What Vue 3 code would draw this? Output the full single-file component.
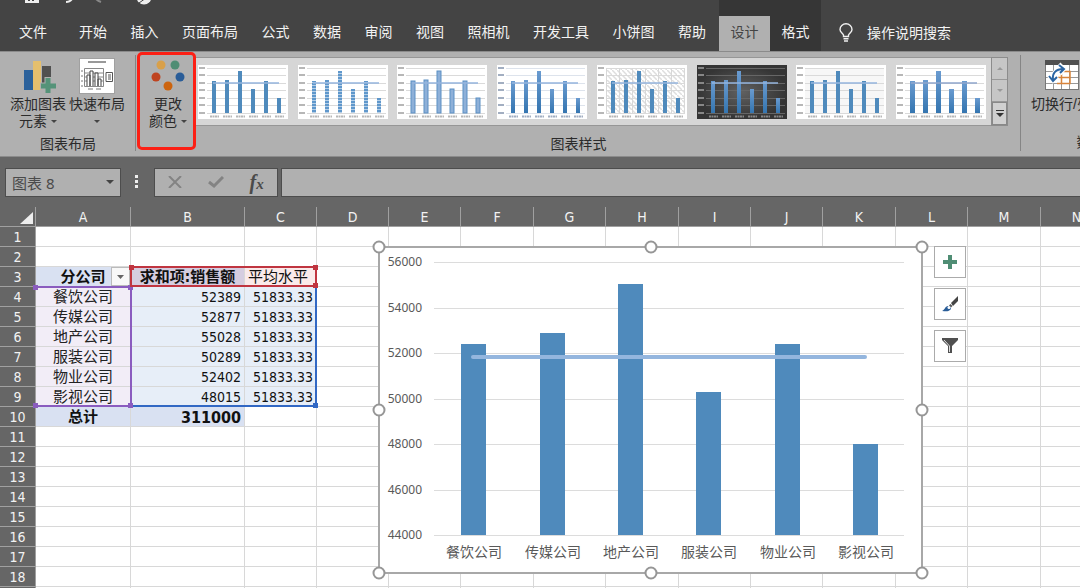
<script setup>
const tabs = ['开始', '插入', '页面布局', '公式', '数据', '审阅', '视图', '照相机', '开发工具', '小饼图', '帮助']

const styles = [
  { id: 'solid', w: 4, fill: '#4f8abc', bg: '#fff' },
  { id: 'striped', w: 4, fill: 'url(#bar-stripes)', bg: '#fff' },
  { id: 'outlined', w: 4, fill: '#8eb0d8', stroke: '#5b8fc4', bg: '#fff' },
  { id: 'blue-axis', w: 4, fill: 'url(#bar-gradient)', bg: '#fff', axis: '#7b8da8', grid: '#dde3ec' },
  { id: 'hatched', w: 4, fill: '#4f8abc', bg: 'url(#hatch)' },
  { id: 'dark', w: 4, fill: 'url(#bar-gradient)', bg: 'url(#dark-bg)', axis: '#aaa', grid: '#666' },
  { id: 'pale', w: 4, fill: '#4f8abc', bg: '#f7f7f7' },
  { id: 'wide', w: 5, fill: 'url(#bar-gradient)', bg: '#fff', line: '#8fa6cc' }
]
const thumbBars = [16, 15, 6, 24, 16, 33].map((y, i) => ({ x: 16 + i * 13, y }))
const thumbGrid = [3, 10, 18, 25, 33, 40, 48]

const letters = 'ABCDEFGHIJKLMN'.split('')
const rows = [
  ['餐饮公司', 52389],
  ['传媒公司', 52877],
  ['地产公司', 55028],
  ['服装公司', 50289],
  ['物业公司', 52402],
  ['影视公司', 48015]
]
const average = 51833.33

function cell(r, c) {
  if (r === 3) return ['分公司', '求和项:销售额', '平均水平'][c] ?? ''
  if (r >= 4 && r <= 9) return [...rows[r - 4], average][c] ?? ''
  if (r === 10) return ['总计', 311000][c] ?? ''
  return ''
}
function cellClass(r, c) {
  if (c > 2) return ''
  if (r === 3) return ['head label', 'head series', 'avg-head'][c]
  if (r >= 4 && r <= 9) return ['label cat', 'num', 'num'][c]
  if (r === 10) return ['head label', 'head num total', ''][c]
  return ''
}

const plot = { left: 55, right: 525, top: 15, base: 288 }
const yOf = v => Math.round(plot.base - ((v - 44000) / 12000) * (plot.base - plot.top))
const ticks = [56000, 54000, 52000, 50000, 48000, 46000, 44000]
const step = (plot.right - plot.left) / rows.length
const bars = rows.map(([name, v], i) => {
  const cx = Math.round(plot.left + step * (i + 0.5))
  return { name, cx, y: yOf(v) }
})
const handles = [[0, 0], [272, 0], [543, 0], [0, 163], [543, 163], [0, 326], [272, 326], [543, 326]]
</script>

<template>
  <div class="app">
    <header class="header">
      <div class="header-left">
        <div class="quick">
          <svg width="140" height="16" viewBox="0 0 140 16">
            <path d="M1 0h14v3H1z" fill="#eee" /><path d="M4 0h2v1H4zM8 0h2v1H8z" fill="#444" />
            <path d="M48 -1 Q46 2 42 2" stroke="#eee" stroke-width="2" fill="none" />
            <path d="M72 -1 Q74 1 77 2" stroke="#888" stroke-width="2" fill="none" />
            <circle cx="120" cy="-3" r="7.500" fill="#eee" /><path d="M115 3l7-5" stroke="#444" />
          </svg>
        </div>
        <nav class="tabs">
          <button class="tab file">文件</button>
          <div class="main-tabs">
            <button v-for="t in tabs" :key="t" class="tab">{{ t }}</button>
          </div>
        </nav>
      </div>
      <div class="context">
        <button class="tab ctx active">设计</button>
        <button class="tab ctx">格式</button>
      </div>
      <button class="tell-me">
        <svg width="14" height="20" viewBox="0 0 14 20" fill="none" stroke="#f0f0f0" stroke-width="1.400">
          <path d="M4.500 13.500V12C3.500 10 1 9 1 6.500a6 5.700 0 0 1 12 0C13 9 10.500 10 9.500 12v1.500z" />
          <path d="M4.500 15.800h5M5 18h4" />
        </svg>
        <span>操作说明搜索</span>
      </button>
    </header>

    <section class="ribbon">
      <div class="group layout">
        <div class="group-body">
          <button class="big">
            <svg class="icon" width="36" height="38" viewBox="0 0 36 38">
              <path d="M4 14h9v20H4z" fill="#2b619b" /><path d="M13 5h8v29h-8z" fill="#e5bf6d" /><path d="M22 10h9v20h-9z" fill="#505050" />
              <path d="M20 30h16M28 21v17" stroke="#b0b0b0" stroke-width="7" /><path d="M21 30h15M28 22v15" stroke="#559379" stroke-width="5" />
            </svg>
            <span>添加图表</span>
            <span>元素<i class="caret"></i></span>
          </button>
          <button class="big">
            <svg class="icon" width="36" height="38" viewBox="0 0 36 38">
              <rect x="0.500" y="2.500" width="35" height="35" fill="#fff" stroke="#a0a0a0" />
              <path d="M9 6h18" stroke="#999" stroke-width="2" />
              <path d="M5.500 12.500h19v18h-19zM5.500 17h19M5.500 21h19M5.500 25h19" fill="none" stroke="#888" />
              <path d="M8 30V19h3v11M11 30V15h3v15M16 30V17h3v13M19 30V23h3v7" fill="#fff" stroke="#444" />
              <path d="M27 16.500h6.500v9H27zM29 19h3M29 21h3M29 23h3" fill="none" stroke="#555" />
              <path d="M2 15h2M2 20h2M2 25h2M2 30h2M9 33h5M17 33h5" stroke="#777" />
            </svg>
            <span>快速布局</span>
            <span class="caret-row"><i class="caret"></i></span>
          </button>
        </div>
        <div class="group-label">图表布局</div>
      </div>

      <div class="group chart-styles">
        <div class="group-body">
          <button class="big colors">
            <svg class="icon" width="36" height="38" viewBox="0 0 36 38">
              <circle cx="11" cy="9" r="4.500" fill="#d9a04a" /><circle cx="25" cy="9" r="4.500" fill="#4f8d74" />
              <circle cx="6" cy="21" r="4.500" fill="#bf431f" /><circle cx="30" cy="21" r="4.500" fill="#2a5d98" />
              <circle cx="18" cy="30" r="4.500" fill="#cc640e" />
            </svg>
            <span>更改</span>
            <span>颜色<i class="caret"></i></span>
          </button>
          <div class="gallery">
            <button v-for="s in styles" :key="s.id" class="thumb" :aria-label="s.id">
              <svg width="90" height="54" viewBox="0 0 90 54">
                <defs>
                  <pattern id="bar-stripes" width="4" height="3" patternUnits="userSpaceOnUse">
                    <rect width="4" height="3" fill="#b5cfe8" /><rect width="4" height="2" fill="#5f97cb" />
                  </pattern>
                  <pattern id="hatch" width="5" height="5" patternUnits="userSpaceOnUse">
                    <rect width="5" height="5" fill="#fff" /><path d="M0 0l5 5" stroke="#dedede" stroke-width="1.500" />
                  </pattern>
                  <linearGradient id="bar-gradient" x2="0" y2="1">
                    <stop stop-color="#6a9bd0" /><stop offset="1" stop-color="#3475b0" />
                  </linearGradient>
                  <radialGradient id="dark-bg">
                    <stop stop-color="#606060" /><stop offset="1" stop-color="#353535" />
                  </radialGradient>
                </defs>
                <rect width="90" height="54" :fill="s.id === 'dark' ? s.bg : '#fff'" />
                <rect x="9" y="3" width="79" height="45" :fill="s.id === 'dark' ? 'none' : s.bg" />
                <g :stroke="s.grid || '#dadada'">
                  <path v-for="y in thumbGrid" :key="y" :d="`M9 ${y}.5H88`" />
                </g>
                <path v-if="s.id === 'hatched'" d="M9.500 3v45M22.500 3v45M35.500 3v45M48.500 3v45M61.500 3v45M74.500 3v45M87.500 3v45" stroke="#d8d8d8" />
                <g :stroke="s.axis || '#999'" stroke-width="2" opacity=".7">
                  <path v-for="y in thumbGrid" :key="y" :d="`M1 ${y}H7`" />
                  <path v-for="b in thumbBars" :key="b.x" :d="`M${b.x - 4} 51.500h9`" stroke-dasharray="2 .5" />
                </g>
                <rect v-for="b in thumbBars" :key="b.x" :x="b.x - 2" :y="b.y" :width="s.w" :height="48 - b.y" :fill="s.fill" :stroke="s.stroke" />
                <path d="M15 18H81" :stroke="s.line || '#94b4de'" stroke-width="1.500" />
              </svg>
            </button>
          </div>
          <div class="scroll">
            <button aria-label="up"><svg width="6" height="3"><path d="M0 3l3-3 3 3z" fill="#999" /></svg></button>
            <button aria-label="down"><svg width="6" height="3"><path d="M0 0l3 3 3-3z" fill="#999" /></svg></button>
            <button class="more" aria-label="more"><svg width="8" height="8"><path d="M0 0h8v1H0zM0 3h8L4 7z" fill="#333" /></svg></button>
          </div>
        </div>
        <div class="group-label">图表样式</div>
        <div class="callout"></div>
      </div>

      <div class="group data">
        <div class="group-body">
          <button class="big">
            <svg class="icon" width="36" height="38" viewBox="0 0 36 38">
              <rect x="2.500" y="4.500" width="33" height="29" fill="#fff" stroke="#777" />
              <path d="M2 4h34v5H2z" fill="#505050" />
              <path d="M3 15.500h32M3 21.500h32M3 27.500h32M10.500 9v24M18.500 9v24M26.500 9v24" stroke="#999" />
              <path d="M18 15.500h9v12H14M27 21.500H15M18.500 15v12" fill="none" stroke="#d8853c" stroke-width="1.500" />
              <path d="M10 24c-1-7 3-11 10-11M16 8l5 5-4 5M6 20l4 5 5-4" fill="none" stroke="#fff" stroke-width="4" />
              <path d="M10 24c-1-7 3-11 10-11M16 9l5 4-4 4M6 20l4 5 4-4" fill="none" stroke="#2b65a3" stroke-width="2" />
            </svg>
            <span>切换行/列</span>
          </button>
        </div>
        <div class="group-label">数据</div>
      </div>
    </section>

    <section class="formula-bar">
      <div class="name-box">
        <input id="name" aria-label="名称框" value="图表 8" />
        <button aria-label="open"><svg width="8" height="4"><path d="M0 0h8L4 4z" fill="#444" /></svg></button>
      </div>
      <svg class="dots" width="4" height="14" fill="#eee"><path d="M0 0h3v3H0zM0 5h3v3H0zM0 10h3v3H0z" /></svg>
      <div class="fx-box">
        <button aria-label="cancel"><svg width="14" height="12" fill="none" stroke="#838383" stroke-width="2"><path d="M1 0l12 12M13 0L1 12" /></svg></button>
        <button aria-label="enter"><svg width="16" height="12" fill="none" stroke="#838383" stroke-width="3"><path d="M1 6l5 4 9-9" /></svg></button>
        <button class="fx">f<small>x</small></button>
      </div>
      <input class="formula" aria-label="编辑栏" />
    </section>

    <main class="sheet">
      <table>
        <colgroup>
          <col class="c-row" /><col class="c-a" /><col class="c-b" />
          <col v-for="n in 12" :key="n" :class="[3, 5, 8, 10].includes(n - 1) ? 'c-wide' : 'c-std'" />
        </colgroup>
        <thead>
          <tr>
            <th class="corner"><svg width="14" height="14"><path d="M14 1v12H1z" fill="#eee" /></svg></th>
            <th v-for="l in letters" :key="l">{{ l }}</th>
          </tr>
        </thead>
        <tbody>
          <tr v-for="r in 18" :key="r">
            <th>{{ r }}</th>
            <td v-for="(l, c) in letters" :key="l" :class="cellClass(r, c)">{{ cell(r, c) }}</td>
          </tr>
          <tr>
            <th></th>
            <td v-for="l in letters" :key="l"></td>
          </tr>
        </tbody>
      </table>

      <button class="filter" aria-label="筛选"><svg width="7" height="4"><path d="M0 0h7L3.500 4z" fill="#666" /></svg></button>
      <div class="range blue"><i class="br"></i></div>
      <div class="range purple"><i class="tl"></i><i class="tr"></i><i class="bl"></i><i class="br"></i></div>
      <div class="range red"><i class="tl"></i><i class="tr"></i><i class="br"></i></div>

      <svg class="chart" width="543" height="326" viewBox="0 0 543 326">
        <rect width="543" height="326" fill="#fff" stroke="#a8a8a8" stroke-width="2" />
        <g v-for="t in ticks" :key="t">
          <path :d="`M${plot.left} ${yOf(t)}.5H${plot.right}`" stroke="#dcdcdc" />
          <text class="tick" x="43" :y="yOf(t) + 4" text-anchor="end">{{ t }}</text>
        </g>
        <g v-for="b in bars" :key="b.name">
          <rect :x="b.cx - 12" :y="b.y" width="25" :height="plot.base - b.y" fill="#4f8abc" />
          <text class="category" :x="b.cx + 1" y="310" text-anchor="middle">{{ b.name }}</text>
        </g>
        <path :d="`M${bars[0].cx} ${yOf(average)}H${bars[5].cx}`" stroke="#94b6de" stroke-width="4" stroke-linecap="round" />
        <circle v-for="h in handles" :key="h.join()" :cx="h[0]" :cy="h[1]" r="5.500" fill="#fff" stroke="#969696" stroke-width="2" />
      </svg>

      <div class="chart-tools">
        <button aria-label="图表元素"><svg width="14" height="14"><path d="M0 7h14M7 0v14" stroke="#4f8d74" stroke-width="4" /></svg></button>
        <button aria-label="图表样式">
          <svg width="18" height="18" viewBox="0 0 18 18">
            <path d="M17 1v5l-5 5-2-3z" fill="#444" /><path d="M9.500 9l2 2-1.500 1.500-2-2z" fill="#555" />
            <path d="M1 16c3-1 3-5 6-5 3 0 4 3 2 4-2 2-5 1-8 1z" fill="#2a5d98" /><circle cx="8" cy="12.500" r="1.500" fill="#fff" />
          </svg>
        </button>
        <button aria-label="图表筛选器">
          <svg width="18" height="18" viewBox="0 0 18 18"><path d="M1 1h16v2l-6 6v7H7V9L1 3z" fill="#505050" /><path d="M3 3l5.500 6v6" fill="none" stroke="#ddd" /></svg>
        </button>
      </div>
    </main>
  </div>
</template>

<style>
body { margin: 0; overflow: hidden; }
</style>

<style scoped>
.app {
  height: 100vh;
  overflow: hidden;
  display: flex;
  flex-direction: column;
  background: #666;
  font: 14px/17px "Liberation Sans", "Noto Sans CJK SC", sans-serif;
  color: #2b2b2b;
}
button, input { font: inherit; color: inherit; border: 0; background: none; padding: 0; margin: 0; border-radius: 0; }
svg { display: block; flex: none; }

.header { display: flex; height: 51px; flex: none; background: #444; color: #f3f3f3; }
.header-left { flex: none; width: 719px; }
.quick { height: 16px; padding-left: 24px; }
.tabs { display: flex; height: 32px; }
.tab { white-space: nowrap; }
.file { width: 66px; }
.main-tabs { display: flex; justify-content: space-between; width: 627px; margin-left: 13px; }
.context { display: flex; flex: none; padding-top: 16px; background: #363636; }
.ctx { width: 51px; height: 35px; padding-bottom: 2px; }
.active { background: #b0b0b0; color: #444; }
.tell-me { display: flex; align-items: center; gap: 14px; margin: 16px 0 0 18px; height: 34px; }

.ribbon { display: flex; flex: none; height: 106px; box-sizing: border-box; background: #b0b0b0; border-top: 1px solid #8b8b8b; border-bottom: 1px solid #8b8b8b; overflow: hidden; }
.group { position: relative; flex: none; display: flex; flex-direction: column; }
.group::after { content: ""; position: absolute; right: 0; top: 3px; bottom: 5px; width: 1px; background: #858585; }
.group-body { display: flex; height: 80px; padding-top: 4px; box-sizing: border-box; }
.group-label { text-align: center; line-height: 28px; }
.layout { width: 136px; }
.layout .group-body { padding-left: 10px; gap: 3px; }
.big { display: flex; flex-direction: column; align-items: center; white-space: nowrap; }
.icon { margin-bottom: 2px; }
.caret { display: inline-block; margin-left: 4px; vertical-align: 3px; border: 3px solid transparent; border-top-color: #444; border-bottom: 0; }
.caret-row .caret { margin-left: 0; }
.chart-styles { width: 885px; }
.colors { width: 60px; padding-left: 4px; box-sizing: border-box; }
.gallery { display: flex; align-items: center; justify-content: space-between; width: 795px; height: 69px; margin-top: 1px; padding: 0 5px 0 2px; box-sizing: border-box; background: #d6d6d6; border: solid #969696; border-width: 1px 0; }
.scroll { display: flex; flex-direction: column; width: 17px; height: 69px; margin-top: 1px; box-sizing: border-box; border: 1px solid #8c8c8c; background: #c6c6c6; }
.scroll button { flex: 1; display: grid; place-items: center; border-bottom: 1px solid #999; }
.scroll .more { border: 1px solid #888; background: #d0d0d0; }
.callout { position: absolute; left: 1px; top: 0; width: 59px; height: 98px; box-sizing: border-box; border: 3px solid #fc2015; border-radius: 5px; pointer-events: none; }
.data { width: 139px; }
.data .group-body { padding-left: 10px; }

.formula-bar { display: flex; align-items: center; flex: none; height: 50px; box-sizing: border-box; padding: 0 0 0 5px; color: #4a4a4a; }
.name-box, .fx-box, .formula { height: 29px; box-sizing: border-box; background: #b0b0b0; border: 1px solid #4d4d4d; }
.name-box { display: flex; width: 116px; font: 15px "Noto Sans", "Noto Sans CJK SC", sans-serif; }
.name-box input { flex: 1; min-width: 0; padding-left: 6px; }
.name-box button { width: 20px; display: grid; place-items: center; }
.dots { margin: 0 15px 0 14px; }
.fx-box { display: flex; width: 124px; }
.fx-box button { flex: 1; display: grid; place-items: center; }
.fx-box .fx { display: block; font: italic bold 20px/26px "Liberation Serif", serif; }
.fx small { font-size: 15px; }
.formula { flex: 1; min-width: 0; margin-left: 3px; border-right: 0; }

.sheet { position: relative; flex: 1; overflow: hidden; background: #fff; }
table { width: 100%; table-layout: fixed; border-collapse: separate; border-spacing: 0; font: 14px/17px "DejaVu Sans Condensed", "Noto Sans CJK SC", sans-serif; }
.c-row { width: 36px; }
.c-a { width: 95px; }
.c-b { width: 114px; }
.c-std { width: 72px; }
.c-wide { width: 73px; }
th, td { height: 20px; box-sizing: border-box; padding: 2px 0 0; border-right: 1px solid #d8d8d8; border-bottom: 1px solid #d8d8d8; white-space: nowrap; overflow: hidden; color: #111; }
th { background: #666; color: #f2f2f2; font-weight: normal; border-color: #a0a0a0; }
.corner svg { margin-left: 19px; margin-top: 1px; }
.label { text-align: center; font-size: 15px; color: #222; }
.cat { background: #f2edf7; }
.num { text-align: right; padding-right: 3px; background: #e7eef8; }
.head { background: #d9e1f2; font-weight: bold; font-size: 15px; color: #111; }
.series { background: #d5cde0; text-align: center; }
.total { font-size: 16px; }
.avg-head { background: #faeaea; font-size: 15px; padding-left: 3px; }

.filter { position: absolute; left: 111px; top: 60px; width: 19px; height: 19px; display: grid; place-items: center; background: #f8f8f8; border: 1px solid #bbb; }
.range { position: absolute; box-sizing: border-box; border: 2px solid; pointer-events: none; }
.range i { position: absolute; width: 5px; height: 5px; background: currentColor; }
.tl, .tr { top: -3px; }
.bl, .br { bottom: -3px; }
.tl, .bl { left: -3px; }
.tr, .br { right: -3px; }
.red { left: 130px; top: 59px; width: 187px; height: 21px; color: #c03540; }
.purple { left: 36px; top: 79px; width: 96px; height: 121px; color: #8a5cbf; border-left-width: 0; }
.blue { left: 130px; top: 79px; width: 187px; height: 121px; color: #3268c4; border-top-width: 0; }

.chart { position: absolute; left: 379px; top: 40px; overflow: visible; }
.tick { font: 12px "Noto Sans", sans-serif; fill: #595959; }
.category { font: 14px "Noto Sans CJK SC", sans-serif; fill: #595959; }
.chart-tools { position: absolute; left: 934px; top: 39px; display: flex; flex-direction: column; gap: 10px; }
.chart-tools button { width: 32px; height: 32px; box-sizing: border-box; display: grid; place-items: center; background: #fff; border: 1px solid #ababab; }
</style>
